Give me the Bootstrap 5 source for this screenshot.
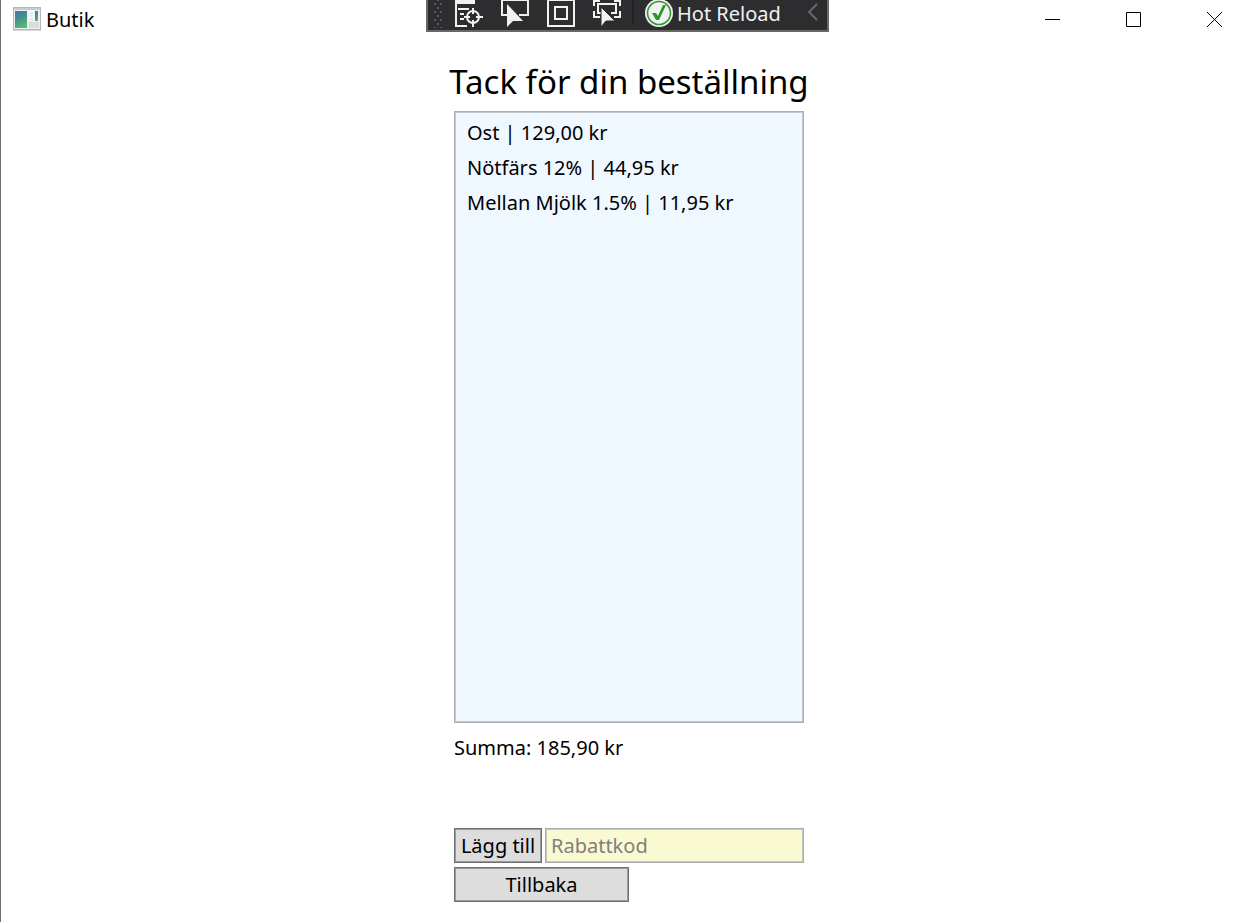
<!DOCTYPE html>
<html lang="sv">
<head>
<meta charset="utf-8">
<meta name="viewport" content="width=device-width, initial-scale=1">
<title>Butik</title>
<link href="https://cdn.jsdelivr.net/npm/bootstrap@5.3.0/dist/css/bootstrap.min.css" rel="stylesheet">
<style>
  body { font-family: "Noto Sans", "Open Sans", sans-serif; font-size: 20px; line-height: 35px; color: #000; background: #fff; }
  .app-window { border-left: 1px solid #6f6f6f; }
  .title-bar { display: grid; grid-template-columns: 1fr auto 1fr; height: 40px; }
  .app-name { padding-left: 12px; gap: 5px; height: 38px; font-size: 20px; }
  .bare-btn { background: none; border: 0; padding: 0; border-radius: 0; color: inherit; line-height: 1; }
  .caption-btn { width: 81px; height: 39px; }
  .caption-btn:last-child { width: 80px; }
  .debug-bar { width: 403px; height: 32px; background: #2d2d30; border: 2px solid #686868; border-top: 0; color: #f1f1f1; }
  .debug-bar svg { height: 30px; display: block; }
  .tool-btn { width: 46px; height: 30px; display: flex; justify-content: center; }
  .bar-divider { width: 2px; height: 25px; background: #232326; margin-left: 2px; margin-right: 11px; }
  .reload-btn { gap: 4px; height: 30px; white-space: nowrap; font-size: 20px; }
  .reload-btn span { line-height: 28px; }
  .order-area { padding-left: 3px; padding-top: 20px; padding-bottom: 20px; }
  .order-panel { width: 350px; }
  .order-title { font-size: 33px; line-height: 44px; margin: 0 -20px 7px; font-weight: 400; text-align: center; white-space: nowrap; }
  .order-list { background: #eff7ff; border: 1px solid #abadb3; box-shadow: inset 0 0 0 1px #c4c8ce; padding: 3px 12px; }
  .order-sum { margin: 7px 0 63px; }
  .form-grid { gap: 3px; }
  .win-btn { background: #ddd; border: 1px solid #707070; box-shadow: inset 0 0 0 1px #9a9a9a; border-radius: 0; padding: 0; height: 35px; line-height: 33px; font-size: 20px; color: #000; }
  .add-btn { width: 88px; }
  .back-btn { width: 50%; margin-top: 4px; }
  .code-box { min-width: 0; height: 35px; border: 1px solid #abadb3; box-shadow: inset 0 0 0 1px #c7c9b8; background: #fafad2; padding: 0 5px; font-size: 20px; line-height: 33px; }
  .code-box::placeholder { color: #808080; opacity: 1; }
</style>
</head>
<body>
<div class="app-window min-vh-100 d-flex flex-column">
  <header class="title-bar">
    <div class="app-name d-flex align-items-center">
      <svg width="28" height="24" viewBox="0 0 28 24" aria-hidden="true">
        <defs>
          <linearGradient id="pane" x1="0" y1="0" x2=".4" y2="1"><stop offset="0" stop-color="#4777a8"/><stop offset=".5" stop-color="#438f91"/><stop offset="1" stop-color="#59b573"/></linearGradient>
        </defs>
        <rect x=".5" y=".5" width="27" height="22" fill="#eef0f1" stroke="#b4b7bd"/>
        <path d="M1 2h26" stroke="#c9ccd2" stroke-width="2"/>
        <rect x="2" y="4" width="12" height="17" fill="url(#pane)"/>
        <rect x="16" y="4" width="5" height="9" fill="#fff"/>
        <path d="M17 6h3M17 9h3M17 12h3" stroke="#c9cbd0"/>
        <rect x="22" y="4" width="3" height="10" fill="url(#pane)"/>
        <rect x="16" y="15" width="10" height="6" fill="#dadcdf"/>
        <path d="M0 23.5h28" stroke="#d6d6d6"/>
      </svg>
      <span>Butik</span>
    </div>
    <div class="debug-bar d-flex" role="toolbar" aria-label="Felsökning">
      <svg width="18" height="30" viewBox="0 0 18 30" aria-hidden="true">
        <defs><pattern id="grip" x="6" y="3" width="6" height="8" patternUnits="userSpaceOnUse"><path d="M0 0h2v2H0zM3 4h2v2H3z" fill="#5a5a5e"/></pattern></defs>
        <rect x="6" y="0" width="9" height="28" fill="url(#grip)"/>
      </svg>
      <button type="button" class="bare-btn tool-btn" aria-label="Visuellt träd">
        <svg width="28" viewBox="0 0 28 30" fill="none" stroke="#f1f1f1" stroke-width="2">
          <path d="M1 0v26h11M19 4V0"/><path d="M0 2h20" stroke-width="4"/><path d="M3 9h11M5 14h4M5 19h4"/>
          <circle cx="18" cy="17" r="6"/><path d="M18 8v6M18 20v7M9 17h6M21 17h7"/>
        </svg>
      </button>
      <button type="button" class="bare-btn tool-btn" aria-label="Välj element">
        <svg width="28" viewBox="0 0 28 30">
          <path d="M6 15H1V0h26v15h-9" fill="none" stroke="#f1f1f1" stroke-width="2"/><path d="M6 4v23l6-6h10z" fill="#f1f1f1"/>
        </svg>
      </button>
      <button type="button" class="bare-btn tool-btn" aria-label="Visa layoutramar">
        <svg width="28" viewBox="0 0 28 30" fill="none" stroke="#f1f1f1" stroke-width="2"><path d="M1 0h26v26H1zM8 7h12v12H8z"/></svg>
      </button>
      <button type="button" class="bare-btn tool-btn" aria-label="Följ fokus">
        <svg width="28" viewBox="0 0 28 30" fill="none" stroke="#f1f1f1" stroke-width="2">
          <path d="M1 6V1h6M21 1h6v5M1 11v6h6M27 11v6h-6M9 13H5V4h18v9h-5"/><path d="M8 7v20l5-6h9z" fill="#f1f1f1" stroke="#2d2d30" stroke-width="1"/>
        </svg>
      </button>
      <div class="bar-divider"></div>
      <button type="button" class="bare-btn reload-btn d-flex me-auto">
        <svg width="28" viewBox="0 0 28 30" aria-hidden="true">
          <circle cx="14" cy="13" r="14" fill="#f1f1f1"/><circle cx="14" cy="13" r="11.5" fill="none" stroke="#339a33" stroke-width="1.6"/>
          <path d="M7 13h4l2 3 5-11h3l-7 15h-3z" fill="#2c962c"/>
        </svg>
        <span>Hot Reload</span>
      </button>
      <button type="button" class="bare-btn me-2" aria-label="Dölj verktygsfält">
        <svg width="12" viewBox="0 0 12 30" fill="none" stroke="#68686b" stroke-width="2"><path d="M10 4L2 12l8 8"/></svg>
      </button>
    </div>
    <div class="d-flex justify-content-end">
      <button type="button" class="bare-btn caption-btn" aria-label="Minimera"><svg width="15" height="15" stroke="#000" class="d-block mx-auto"><path d="M0 7.5h15"/></svg></button>
      <button type="button" class="bare-btn caption-btn" aria-label="Maximera"><svg width="15" height="15" stroke="#000" fill="none" class="d-block mx-auto"><path d="M.5 .5h14v14H.5z"/></svg></button>
      <button type="button" class="bare-btn caption-btn" aria-label="Stäng"><svg width="15" height="15" stroke="#000" class="d-block mx-auto"><path d="M0 0l15 15M15 0L0 15"/></svg></button>
    </div>
  </header>
  <main class="order-area flex-grow-1 d-flex justify-content-center">
    <div class="order-panel d-flex flex-column">
      <h1 class="order-title">Tack för din beställning</h1>
      <ul class="order-list list-unstyled mb-0 flex-grow-1">
        <li>Ost | 129,00 kr</li>
        <li>Nötfärs 12% | 44,95 kr</li>
        <li>Mellan Mjölk 1.5% | 11,95 kr</li>
      </ul>
      <p class="order-sum">Summa: 185,90 kr</p>
      <div class="form-grid d-flex">
        <button type="button" class="win-btn add-btn flex-shrink-0">Lägg till</button>
        <input type="text" class="code-box flex-grow-1" placeholder="Rabattkod" aria-label="Rabattkod">
      </div>
      <button type="button" class="win-btn back-btn">Tillbaka</button>
    </div>
  </main>
</div>
<script src="https://cdn.jsdelivr.net/npm/bootstrap@5.3.0/dist/js/bootstrap.bundle.min.js"></script>
</body>
</html>
